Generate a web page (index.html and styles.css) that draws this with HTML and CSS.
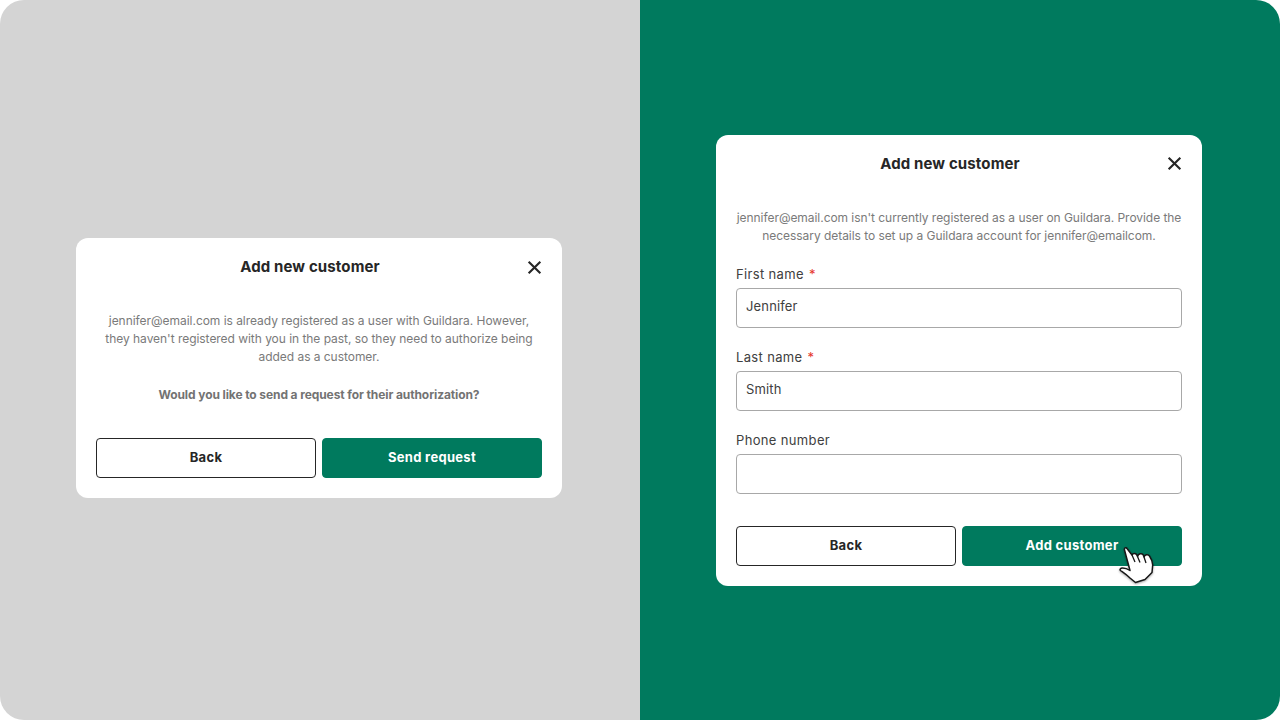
FILE: index.html
```html
<!DOCTYPE html>
<html lang="en">
<head>
    <meta charset="UTF-8">
    <meta name="viewport" content="width=device-width, initial-scale=1.0">
    <title>Add new customer</title>
    <link rel="stylesheet" href="styles.css">
</head>
<body>
    <div class="stage">
        <section class="panel panel-grey">
            <div class="dialog">
                <div class="dialog-head">
                    <h2>Add new customer</h2>
                    <svg class="close" viewBox="0 0 16 16"><path d="M2.500 2.500l11 11M13.500 2.500l-11 11"/></svg>
                </div>
                <div class="message">
                    <p>jennifer@email.com is already registered as a user with Guildara. However, they haven't registered with you in the past, so they need to authorize being added as a customer.</p>
                    <p class="ask">Would you like to send a request for their authorization?</p>
                </div>
                <div class="actions">
                    <button class="btn btn-outline">Back</button>
                    <button class="btn btn-primary">Send request</button>
                </div>
            </div>
        </section>
        <section class="panel panel-green">
            <div class="dialog">
                <div class="dialog-head">
                    <h2>Add new customer</h2>
                    <svg class="close" viewBox="0 0 16 16"><path d="M2.500 2.500l11 11M13.500 2.500l-11 11"/></svg>
                </div>
                <p class="intro">jennifer@email.com isn't currently registered as a user on Guildara. Provide the necessary details to set up a Guildara account for jennifer@emailcom.</p>
                <div class="field">
                    <label>First name <span class="req">*</span></label>
                    <div class="input">Jennifer</div>
                </div>
                <div class="field">
                    <label>Last name <span class="req">*</span></label>
                    <div class="input">Smith</div>
                </div>
                <div class="field">
                    <label>Phone number</label>
                    <div class="input"></div>
                </div>
                <div class="actions actions-form">
                    <button class="btn btn-outline">Back</button>
                    <button class="btn btn-primary">Add customer</button>
                </div>
                <svg class="cursor" viewBox="0 0 44 44">
                    <path d="M9.500 9C9 7 11 6 12 7.500L17 14C18 12 20.500 12 21.500 13.500L22.500 15.500C23.500 12.500 26.500 12 28 13.500L29 16C30 13.500 33 13 34.500 15C36.500 18 37.500 21 37.700 24L37 31.500L30 38.500L20.500 41.500L15 37C12 34 9 32 5.500 29.500C4.500 28.500 5.500 27 7.500 27C10 27 12 27.500 15 29.500Z"/>
                    <path class="finger" d="M17 14l3 7M22.500 15.500l2.500 6M29 16l2 6"/>
                </svg>
            </div>
        </section>
    </div>
</body>
</html>
```

FILE: styles.css
```css
* {
    box-sizing: border-box;
}
html, body {
    margin: 0;
    height: 100%;
    background: #ffffff;
}
body {
    font-family: Inter, "Liberation Sans", sans-serif;
    color: #262626;
}
.stage {
    display: flex;
    width: 1280px;
    height: 720px;
    border-radius: 24px;
    overflow: hidden;
}
.panel {
    width: 640px;
    height: 720px;
    display: flex;
    align-items: center;
    justify-content: center;
    padding-right: 2px;
}
.panel-grey {
    background: #d4d4d4;
    padding-top: 16px;
}
.panel-green {
    background: #007a5e;
}
.dialog {
    position: relative;
    width: 486px;
    padding: 20px;
    background: #ffffff;
    border-radius: 12px;
}
.dialog-head {
    display: flex;
    align-items: center;
    gap: 2px;
    height: 18px;
}
.dialog-head h2 {
    flex: 1;
    margin: 0;
    font-size: 15px;
    line-height: 18px;
    font-weight: 700;
    letter-spacing: 0.12px;
    text-align: center;
}
.close {
    width: 17px;
    height: 17px;
    margin-right: -1px;
    fill: none;
    stroke: #262626;
    stroke-width: 2;
}
.message, .intro {
    margin: 36px 0 0;
    font-size: 12px;
    line-height: 18px;
    letter-spacing: -0.04px;
    text-align: center;
    color: #7a7a7a;
}
.message p {
    margin: 0;
}
.message .ask {
    margin-top: 20px;
    font-weight: 700;
    letter-spacing: -0.1px;
    color: #737373;
}
.intro {
    margin-bottom: 1px;
    letter-spacing: -0.05px;
}
.field {
    margin-top: 20px;
}
.field label {
    display: block;
    font-size: 13px;
    line-height: 18px;
    letter-spacing: 0.35px;
    margin-bottom: 5px;
    color: #404040;
}
.req {
    margin-left: 1px;
    color: #e5342b;
}
.input {
    height: 40px;
    padding: 0 9px;
    border: 1px solid #a8a8a8;
    border-radius: 4px;
    font-size: 13px;
    line-height: 34px;
    letter-spacing: 0.15px;
    color: #404040;
}
.actions {
    display: flex;
    gap: 6px;
    margin-top: 34px;
}
.actions-form {
    margin-top: 32px;
}
.btn {
    flex: 1;
    height: 40px;
    padding: 0 0 2px;
    border-radius: 4px;
    font-family: inherit;
    font-size: 13px;
    font-weight: 700;
    letter-spacing: 0.3px;
}
.btn-outline {
    background: #ffffff;
    color: #262626;
    border: 1px solid #262626;
}
.btn-primary {
    background: #007a5e;
    color: #ffffff;
    border: 1px solid #007a5e;
}
.cursor {
    position: absolute;
    left: 399px;
    top: 406px;
    width: 44px;
    height: 44px;
    fill: #ffffff;
    stroke: #171717;
    stroke-width: 1.5;
    stroke-linejoin: round;
    filter: drop-shadow(0 1px 1px rgba(0, 0, 0, 0.35));
}
.cursor .finger {
    fill: none;
    stroke-width: 1.3;
}
```
